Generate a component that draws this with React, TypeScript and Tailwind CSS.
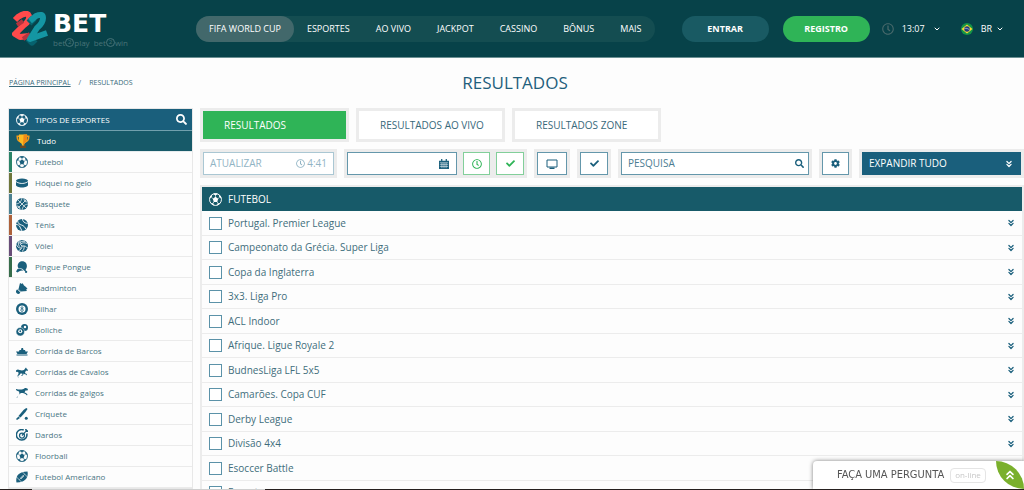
import { ReactNode } from "react";
import clsx from "clsx";
import { FaCheck, FaCog, FaRegClock, FaSearch } from "react-icons/fa";
import { ChevronDown, ChevronsDown, ChevronsUp } from "lucide-react";

function Icon({
    children,
    className = "size-3",
}: {
    children: ReactNode;
    className?: string;
}) {
    return (
        <svg
            viewBox="0 0 24 24"
            fill="currentColor"
            className={clsx("shrink-0", className)}
            aria-hidden="true"
        >
            {children}
        </svg>
    );
}

function SoccerBall({ className }: { className?: string }) {
    return (
        <Icon className={className}>
            <circle
                cx="12"
                cy="12"
                r="11"
                fill="none"
                stroke="currentColor"
                strokeWidth="1.8"
            />
            <path d="M12 6.8l5 3.7-1.9 5.9H8.9L7 10.5zM7.6 1.9L12 4.4l4.4-2.5C13.6.8 10.4.8 7.6 1.9zM1.2 10.3l4-2.9.6-4.3C3 4.8 1.2 7.5 1.2 10.3zM22.8 10.3l-4-2.9-.6-4.3c2.8 1.7 4.6 4.4 4.6 7.2zM3.2 18.4l4.6.3 1.8 4.2c-2.9-.7-5-2.2-6.4-4.5zM20.8 18.4l-4.6.3-1.8 4.2c2.9-.7 5-2.2 6.4-4.5z" />
            <path
                d="M12 7V4M7 10.5L5 8M17 10.5L19 8M9 16l-1.5 3M15 16l1.5 3"
                stroke="currentColor"
                strokeWidth="1.3"
            />
        </Icon>
    );
}

function Puck() {
    return (
        <Icon>
            <ellipse cx="12" cy="7.5" rx="12" ry="4.5" />
            <path d="M0 9.5c2 3 7 4 12 4s10-1 12-4V16c0 2.500-5 5-12 5S0 18.500 0 16z" />
        </Icon>
    );
}

function Basketball() {
    return (
        <Icon>
            <circle cx="12" cy="12" r="12" />
            <path
                d="M3.5 3.5l17 17M20.5 3.5l-17 17M12 0c-2 8-5 11-12 12M24 12c-7 1-10 4-12 12M16 1c0 5 2 7 7 7M1 16c5 0 7 2 7 7"
                fill="none"
                stroke="#fff"
                strokeWidth="1.5"
            />
        </Icon>
    );
}

function TennisBall() {
    return (
        <Icon>
            <circle cx="12" cy="12" r="12" />
            <path
                d="M3 3c1 6 4 8 8 9s8 5 9 9M0 11c4 0 7 2 8 5s3 5 4 8M13 0c0 4 3 8 10 9"
                fill="none"
                stroke="#fff"
                strokeWidth="1.8"
            />
        </Icon>
    );
}

function Volleyball() {
    return (
        <Icon>
            <circle cx="12" cy="12" r="12" />
            <path
                d="M12 12C8 9 7 5 8 1M12 12c5-1 9 1 11 4M12 12c0 5-3 8-7 9M9 8c4-3 9-3 13-1M8 5c4-3 8-3 10-2M16 12c1 5-1 9-4 11M10 16C5 16 2 13 1 9M5 3c-1 4 0 7 2 10"
                fill="none"
                stroke="#fff"
                strokeWidth="1.6"
            />
        </Icon>
    );
}

function Paddle() {
    return (
        <Icon>
            <path d="M6 3c4-4 11-3 14 1 3 5 2 10-1 14l4 4-2 1-5-4c-3-4-6-5-10-4C2 12 3 6 6 3z" />
            <path d="M3 16c4-1 9 0 12 3-4 0-7 0-9 2l-3 2-3-2z" />
            <circle cx="20" cy="22" r="2" />
        </Icon>
    );
}

function Shuttlecock() {
    return (
        <Icon>
            <path d="M8 2l4 2 1-2 3 5 4 3 3 4-3 1 2 3-12 1-5-5z" />
            <path d="M4 14l5 5-1 3c-2 3-5 2-7 0s-1-5 1-7z" />
            <path d="M2 14l7 7" stroke="#fff" strokeWidth="1.2" />
        </Icon>
    );
}

function Billiard() {
    return (
        <Icon>
            <circle cx="12" cy="12" r="12" />
            <circle cx="12" cy="12" r="7" fill="#fff" />
            <g fill="none" stroke="currentColor" strokeWidth="1.6">
                <circle cx="12" cy="9.5" r="2" />
                <circle cx="12" cy="14.3" r="2.5" />
            </g>
        </Icon>
    );
}

function Bowling() {
    return (
        <Icon>
            <circle cx="17" cy="7" r="7" />
            <circle cx="18" cy="6" r="2.5" fill="#fff" />
            <circle cx="8.5" cy="15.5" r="8.5" stroke="#fff" strokeWidth="1" />
            <circle cx="8.5" cy="14.5" r="4" fill="#fff" />
            <circle cx="8.5" cy="14.5" r="1.8" />
        </Icon>
    );
}

function Boat() {
    return (
        <Icon>
            <path d="M0 13h6l1-3h3l1-4h3l1 4h3l1 3h5l-3 5H3zM1 19h22v2H1z" />
        </Icon>
    );
}

function Horse() {
    return (
        <Icon>
            <path d="M0 9c3-3 5-2 7-1 4 1 6 1 9 0l3-4 1-1 1 2 3 3-1 2-3-1-2 4 1 2 3 1-1 3-1-2-4-1-2-1H9l-2 3-3 2 1 3H4l-1-4 2-3v-3c-2-2-3-2-5-1z" />
            <path d="M14 13l1 4-3 3h-2l3-3-1-4z" />
        </Icon>
    );
}

function Greyhound() {
    return (
        <Icon>
            <path d="M0 4c5 1 9 2 15 0l3-2h2l4 2-1 3h-4l-2 4 3 1 3 3-1 2-3-3-5-2h-4l-4 3-3 4-2 3H2l2-4 3-5-1-4C4 8 2 8 0 6z" />
        </Icon>
    );
}

function Cricket() {
    return (
        <Icon>
            <path d="M21 0l2 2-4 6L9 19l-4-3L15 4l4-3z" />
            <path d="M5 17l3 3-6 4-2-2z" />
            <circle cx="20.5" cy="20.5" r="3" />
        </Icon>
    );
}

function Darts() {
    return (
        <Icon>
            <g fill="none" stroke="currentColor">
                <path d="M21.5 9a10.5 10.5 0 1 1-6-7" strokeWidth="3" />
                <circle cx="12" cy="13" r="5" strokeWidth="2.5" />
            </g>
            <path d="M11 12l8-8-1-4h3l1 2 2 1v3h-4l-7 8z" />
        </Icon>
    );
}

function AmericanFootball() {
    return (
        <Icon>
            <path d="M23 1c2 9-1 22-22 22C-1 14 2 1 23 1z" />
            <path
                d="M7 17L17 7M9 13l3 3M11 11l3 3M13 9l3 3M12 1l11 11M1 12l11 11"
                fill="none"
                stroke="#fff"
                strokeWidth="1.2"
            />
        </Icon>
    );
}

function Trophy() {
    return (
        <Icon className="size-[14px]">
            <path
                d="M7 4H2c0 6 2 9 7 10M17 4h5c0 6-2 9-7 10"
                fill="none"
                stroke="#f09a1c"
                strokeWidth="2.5"
            />
            <path d="M5 1h14c1 9-1 14-5 16v3h-4v-3C6 15 4 10 5 1z" fill="#fdbb22" />
            <path d="M13 1h6c1 9-1 14-5 16v3h-2z" fill="#f08a16" />
            <path d="M7 20h10v4H7z" fill="#6b4a24" />
        </Icon>
    );
}

function Calendar() {
    return (
        <Icon className="size-[10px]">
            <path d="M0 4h24v20H0zM5 0h3v5H5zM16 0h3v5h-3z" />
            <path
                d="M2 9h20M2 13.5h20M2 18h20M7 9v13M12 9v13M17 9v13"
                stroke="#fff"
                strokeWidth="1.2"
            />
        </Icon>
    );
}

function Screen() {
    return (
        <Icon className="size-3">
            <path
                d="M2 4h20v14H2z"
                fill="none"
                stroke="currentColor"
                strokeWidth="2"
            />
            <path d="M7 19h10v3H7z" />
        </Icon>
    );
}

const navItems = [
    "FIFA WORLD CUP",
    "ESPORTES",
    "AO VIVO",
    "JACKPOT",
    "CASSINO",
    "BÔNUS",
    "MAIS",
];

const sports = [
    { name: "Futebol", icon: <SoccerBall />, strip: "bg-[#2a8468]" },
    { name: "Hóquei no gelo", icon: <Puck />, strip: "bg-[#6d763b]" },
    { name: "Basquete", icon: <Basketball />, strip: "bg-[#4b8192]" },
    { name: "Tênis", icon: <TennisBall />, strip: "bg-[#ad613b]" },
    { name: "Vôlei", icon: <Volleyball />, strip: "bg-[#684d78]" },
    { name: "Pingue Pongue", icon: <Paddle />, strip: "bg-[#376d4b]" },
    { name: "Badminton", icon: <Shuttlecock /> },
    { name: "Bilhar", icon: <Billiard /> },
    { name: "Boliche", icon: <Bowling /> },
    { name: "Corrida de Barcos", icon: <Boat /> },
    { name: "Corridas de Cavalos", icon: <Horse /> },
    { name: "Corridas de galgos", icon: <Greyhound /> },
    { name: "Críquete", icon: <Cricket /> },
    { name: "Dardos", icon: <Darts /> },
    { name: "Floorball", icon: <SoccerBall /> },
    { name: "Futebol Americano", icon: <AmericanFootball /> },
];

const leagues = [
    "Portugal. Premier League",
    "Campeonato da Grécia. Super Liga",
    "Copa da Inglaterra",
    "3x3. Liga Pro",
    "ACL Indoor",
    "Afrique. Ligue Royale 2",
    "BudnesLiga LFL 5x5",
    "Camarões. Copa CUF",
    "Derby League",
    "Divisão 4x4",
    "Esoccer Battle",
    "Esports",
];

// Two folded ribbons, the teal one in front
function Emblem() {
    return (
        <svg viewBox="0 0 37 36" className="h-9 w-[37px]" aria-hidden="true">
            <g fill="none" strokeLinejoin="round">
                <path
                    d="M3 9l3-3q9-6 11-1q1 5-5 9l-9 9 5 3 9-1"
                    stroke="#ff4a4b"
                    strokeWidth="6"
                />
                <path d="M11 28l7-5M5 14l6-4" stroke="#b5343f" strokeWidth="4" />
                <path
                    d="M17 12l5-5M16 27l4 4 3-3"
                    stroke="#06626e"
                    strokeWidth="7"
                />
                <path
                    d="M18 10l6-5q7-3 7 2q0 5-6 10l-7 11 17-6"
                    stroke="#1496a3"
                    strokeWidth="6"
                />
            </g>
        </svg>
    );
}

function Logo() {
    return (
        <a href="#" className="flex w-[184px] shrink-0 items-start gap-1 pt-px">
            <Emblem />
            <span className="flex flex-col">
                <span className="font-['DejaVu_Sans',sans-serif] text-[25px] leading-[25px] font-bold text-white">
                    BET
                </span>
                <span className="flex items-center gap-1 pt-[2px] text-[8px] leading-[10px] text-[#477378]">
                    {["play", "win"].map((word) => (
                        <span key={word} className="flex items-center">
                            bet
                            <span className="flex size-[9px] items-center justify-center rounded-full border border-[#477378] text-[6px] leading-[7px]">
                                2
                            </span>
                            {word}
                        </span>
                    ))}
                </span>
            </span>
        </a>
    );
}

function Header() {
    return (
        <header className="flex h-[58px] items-center border-b border-[#6b9093] bg-[#074249] pr-[18px] pl-3 text-white">
            <Logo />
            <nav className="flex h-[26px] shrink-0 items-center rounded-full bg-[#144d51]">
                {navItems.map((item, i) => (
                    <a
                        key={item}
                        href="#"
                        className={clsx(
                            "flex h-full items-center px-[13px] text-[9px] font-medium whitespace-nowrap",
                            i === 0 && "rounded-full bg-[#42686b]"
                        )}
                    >
                        {item}
                    </a>
                ))}
            </nav>
            <div className="ml-auto flex shrink-0 items-center">
                <button className="mr-[14px] h-[26px] w-[87px] rounded-full bg-[#195a63] text-[9px] font-bold">
                    ENTRAR
                </button>
                <button className="mr-3 h-[26px] w-[87px] rounded-full bg-[#2fb457] text-[9px] font-bold">
                    REGISTRO
                </button>
                <button className="mr-5 flex items-center gap-2 text-[9px]">
                    <FaRegClock className="size-3 text-[#48696b]" />
                    13:07
                    <ChevronDown className="size-2" strokeWidth={3} />
                </button>
                <button className="mr-[2px] flex items-center gap-1 text-[9px]">
                    <svg viewBox="0 0 24 24" className="mr-1 size-3">
                        <circle cx="12" cy="12" r="12" fill="#159447" />
                        <path d="M1 12l11-9 11 9-11 9z" fill="#fcd92f" />
                        <circle cx="12" cy="12" r="5.5" fill="#203b80" />
                        <path d="M7 11c4-1 7 0 10 3" fill="none" stroke="#fff" />
                    </svg>
                    BR
                    <ChevronDown className="size-2" strokeWidth={3} />
                </button>
            </div>
        </header>
    );
}

function Sidebar() {
    return (
        <aside className="w-[185px] shrink-0 border border-[#e8e8e8] text-[8px]">
            <div className="flex h-[22px] items-center gap-[7px] border-b border-[#71a0ad] bg-[#1a5f7c] pr-[5px] pl-[7px] text-white">
                <SoccerBall />
                <h2>TIPOS DE ESPORTES</h2>
                <button className="ml-auto" aria-label="Pesquisar esportes">
                    <FaSearch className="size-[11px]" />
                </button>
            </div>
            <a
                href="#"
                className="flex h-[21px] items-center gap-[7px] border-b border-[#e6ecee] bg-[#175a69] pl-[7px] text-white"
            >
                <Trophy />
                Tudo
            </a>
            <ul>
                {sports.map(({ name, icon, strip }) => (
                    <li key={name} className="h-[21px] border-b border-[#ebebeb]">
                        <a
                            href="#"
                            className="flex h-full items-center text-[#497583]"
                        >
                            <span className={clsx("h-full w-[3px]", strip)} />
                            <span className="mr-[7px] ml-1 text-[#1a5f7c]">
                                {icon}
                            </span>
                            {name}
                        </a>
                    </li>
                ))}
            </ul>
        </aside>
    );
}

function Tabs() {
    return (
        <div className="mb-[7px] flex gap-[7px]">
            {["RESULTADOS", "RESULTADOS AO VIVO", "RESULTADOS ZONE"].map(
                (tab, i) => (
                    <button
                        key={tab}
                        className={clsx(
                            "h-[34px] w-[149px] border-[3px] border-[#ececec] pl-[21px] text-left text-[10px]",
                            i === 0
                                ? "bg-[#2fb457] text-white"
                                : "bg-white text-[#38697b]"
                        )}
                    >
                        {tab}
                    </button>
                )
            )}
        </div>
    );
}

function Toolbar() {
    const frame = "flex h-[29px] bg-[#ececec] p-[3px]";
    const box = "flex h-full items-center border bg-white";
    const blue = "border-[#6497ab] text-[#1a5f7c]";
    const green = "border-[#82cf9a] text-[#2fb457]";

    return (
        <div className="flex gap-[7px] text-[10px]">
            <div className={clsx(frame, "w-[137px]")}>
                <button
                    className={clsx(
                        box,
                        "w-full justify-between border-[#aac7d3] px-[6px] text-[#91b4c4]"
                    )}
                >
                    ATUALIZAR
                    <span className="flex items-center gap-[2px]">
                        <FaRegClock className="size-[9px]" />
                        4:41
                    </span>
                </button>
            </div>
            <div className={clsx(frame, "w-[183px] gap-[6px]")}>
                <label className={clsx(box, blue, "w-[110px] pr-[7px]")}>
                    <input
                        type="text"
                        aria-label="Data"
                        className="w-full min-w-0 outline-none"
                    />
                    <Calendar />
                </label>
                <button
                    aria-label="Hora"
                    className={clsx(box, green, "w-[27px] justify-center")}
                >
                    <FaRegClock className="size-[10px]" />
                </button>
                <button
                    aria-label="Confirmar data"
                    className={clsx(box, green, "w-[28px] justify-center")}
                >
                    <FaCheck className="size-[9px]" />
                </button>
            </div>
            <div className={clsx(frame, "w-[36px]")}>
                <button
                    aria-label="Transmissões"
                    className={clsx(box, blue, "w-full justify-center")}
                >
                    <Screen />
                </button>
            </div>
            <div className={clsx(frame, "w-[34px]")}>
                <button
                    aria-label="Selecionados"
                    className={clsx(box, blue, "w-full justify-center")}
                >
                    <FaCheck className="size-[9px]" />
                </button>
            </div>
            <div className={clsx(frame, "min-w-0 flex-1")}>
                <label className={clsx(box, blue, "w-full pr-1 pl-[6px]")}>
                    <input
                        type="text"
                        aria-label="Pesquisa"
                        placeholder="PESQUISA"
                        className="w-full min-w-0 outline-none placeholder:text-[#4c7c91]"
                    />
                    <FaSearch className="size-[9px] shrink-0" />
                </label>
            </div>
            <div className={clsx(frame, "w-[33px]")}>
                <button
                    aria-label="Configurações"
                    className={clsx(box, blue, "w-full justify-center")}
                >
                    <FaCog className="size-[9px]" />
                </button>
            </div>
            <div className={clsx(frame, "w-[165px]")}>
                <button className="flex h-full w-full items-center justify-between bg-[#1a5f7c] px-[7px] text-white">
                    EXPANDIR TUDO
                    <ChevronsDown className="size-[10px]" strokeWidth={3} />
                </button>
            </div>
        </div>
    );
}

function LeagueList() {
    return (
        <section className="mt-[7px] border-2 border-[#ececec]">
            <h2 className="flex h-6 items-center gap-[6px] bg-[#175a69] pl-[7px] text-[10px] text-white">
                <SoccerBall className="size-[13px]" />
                FUTEBOL
            </h2>
            <ul>
                {leagues.map((league) => (
                    <li
                        key={league}
                        className="flex items-center border-b border-[#ececec] pr-[6px] pl-[7px] odd:h-[25px] even:h-6"
                    >
                        <label className="flex items-center gap-[6px] text-[10px] text-[#3f6d7c]">
                            <input
                                type="checkbox"
                                className="size-[13px] appearance-none border border-[#5b92a8] bg-white"
                            />
                            {league}
                        </label>
                        <button
                            className="ml-auto text-[#1a5f7c]"
                            aria-label={`Expandir ${league}`}
                        >
                            <ChevronsDown
                                className="size-[10px]"
                                strokeWidth={3}
                            />
                        </button>
                    </li>
                ))}
            </ul>
        </section>
    );
}

function ChatWidget() {
    return (
        <button className="fixed right-0 bottom-px flex h-7 w-[211px] items-center rounded-tl-sm bg-white pl-6 shadow-[0_0_4px_rgba(0,0,0,0.5)]">
            <span className="font-['DejaVu_Sans_Condensed','DejaVu_Sans',sans-serif] text-[11px] whitespace-nowrap text-[#555]">
                FAÇA UMA PERGUNTA
            </span>
            <span className="ml-auto flex h-[15px] w-9 items-center justify-center rounded-sm border border-[#e5e5e5] text-[8px] text-[#c8c8c8]">
                on-line
            </span>
            <span className="ml-[10px] flex size-7 items-center justify-center rounded-tr-full rounded-bl-full bg-[#7ab02c] text-white">
                <ChevronsUp className="size-[14px]" strokeWidth={3} />
            </span>
        </button>
    );
}

export default function App() {
    return (
        <div className="h-screen overflow-hidden bg-[#fdfdfd] font-['Open_Sans',sans-serif]">
            <Header />
            <div className="grid h-[50px] grid-cols-[1fr_auto_1fr] items-center pr-[3px] pl-[9px] text-[#38697b]">
                <div className="flex gap-2 text-[7px]">
                    <a href="#" className="underline">
                        PÁGINA PRINCIPAL
                    </a>
                    <span>/</span>
                    <span>RESULTADOS</span>
                </div>
                <h1 className="text-[17px] text-[#1f5f7c]">RESULTADOS</h1>
            </div>
            <div className="flex items-start gap-[7px] pl-2">
                <Sidebar />
                <main className="min-w-0 flex-1">
                    <Tabs />
                    <Toolbar />
                    <LeagueList />
                </main>
            </div>
            <ChatWidget />
            <div className="fixed inset-x-0 bottom-0 flex h-px bg-[#26201f]">
                <div className="ml-8 w-[233px] bg-[#cfcfcf]" />
            </div>
        </div>
    );
}
